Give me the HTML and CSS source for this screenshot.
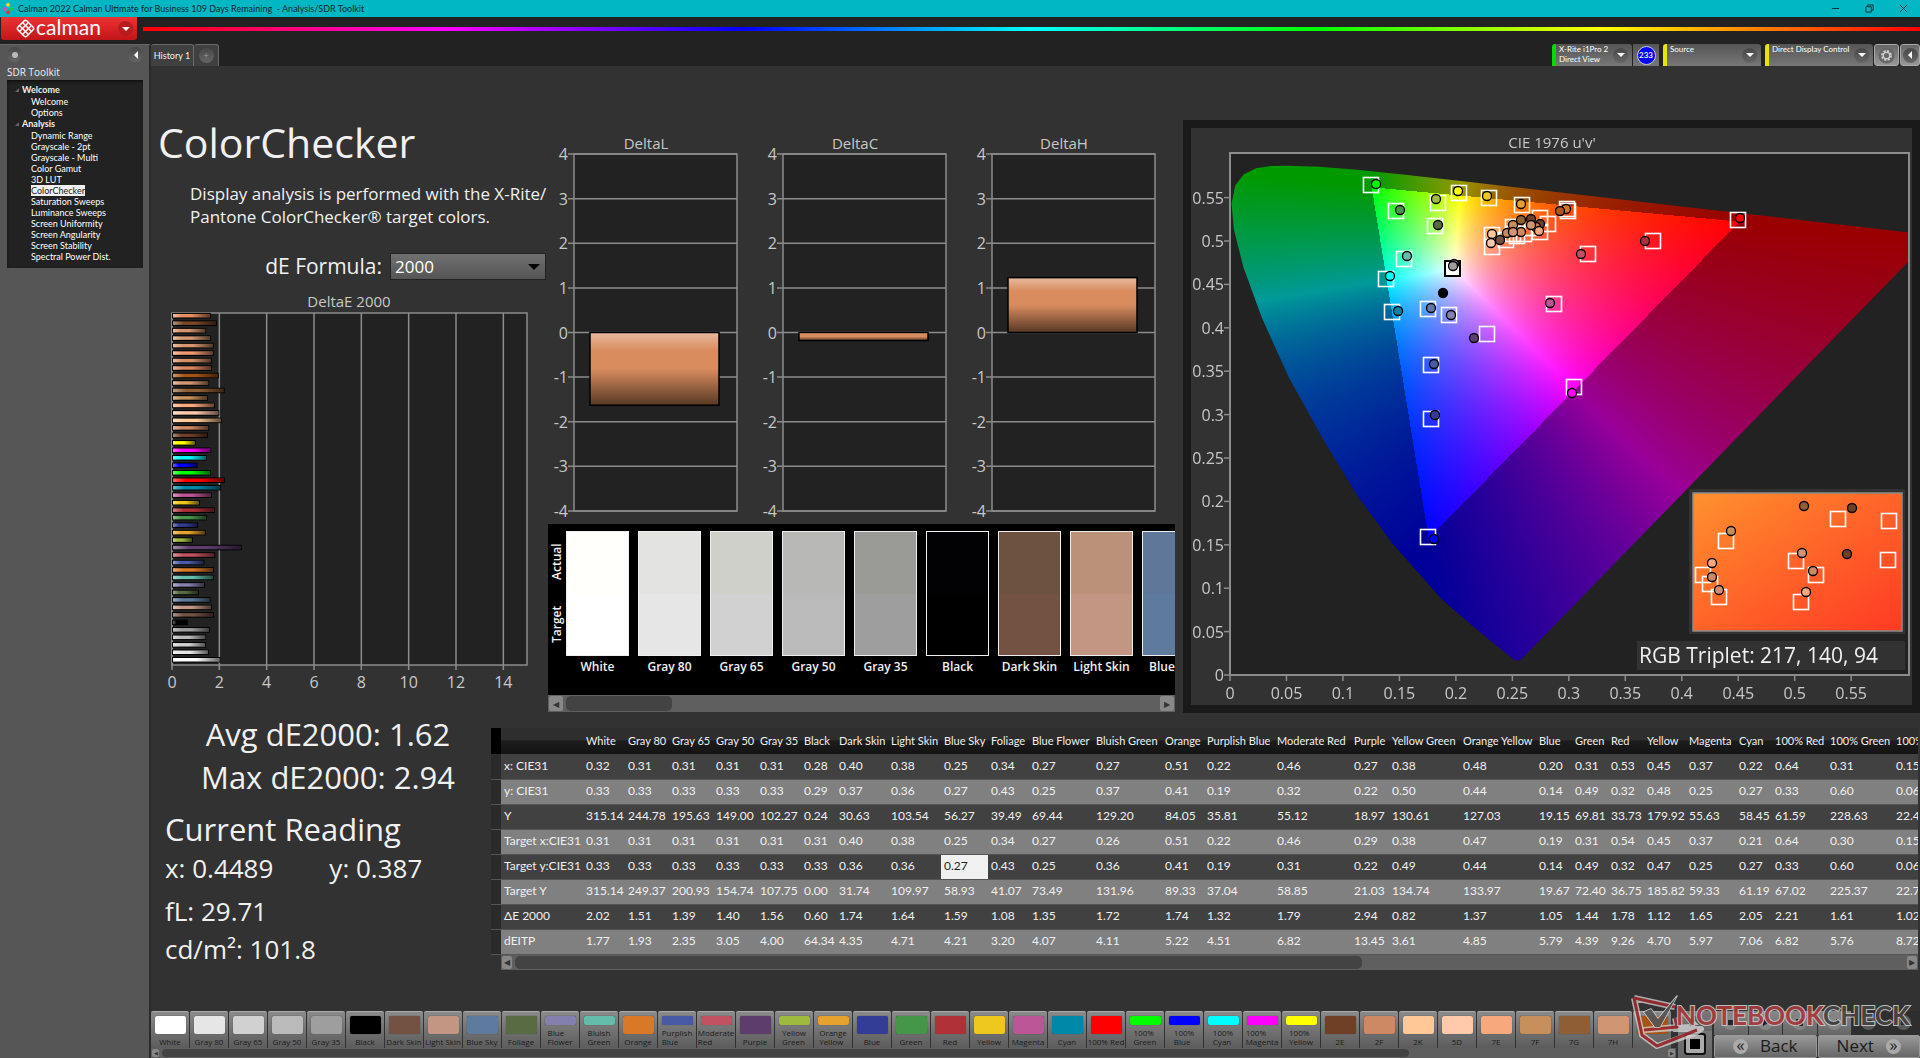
FILE: index.html
```html
<!DOCTYPE html>
<html lang="en">
<head>
    <meta charset="UTF-8">
    <meta name="viewport" content="width=device-width, initial-scale=1.0">
    <title>Calman 2022 - SDR Toolkit</title>
    <link rel="stylesheet" href="styles.css">
</head>
<body>
    <header class="titlebar">
        <svg class="app-icon" viewBox="0 0 14 14">
            <rect x="5" y="0" width="4" height="4" rx="1" fill="#ffd21f" transform="rotate(45 7 2)"/>
            <rect x="1" y="5" width="4" height="4" rx="1" fill="#ff3bb0" transform="rotate(45 3 7)"/>
            <rect x="9" y="5" width="4" height="4" rx="1" fill="#1fc83a" transform="rotate(45 11 7)"/>
            <rect x="5" y="9" width="4" height="4" rx="1" fill="#f03030" transform="rotate(45 7 11)"/>
        </svg>
        <span class="titlebar-text">Calman 2022 Calman Ultimate for Business 109 Days Remaining &nbsp;- Analysis/SDR Toolkit</span>
        <button class="win" aria-label="Minimize"><svg viewBox="0 0 10 10"><path d="M1 5h8"/></svg></button>
        <button class="win" aria-label="Restore"><svg viewBox="0 0 10 10"><path d="M1 3h6v6h-6zM3 3V1h6v6H7"/></svg></button>
        <button class="win" aria-label="Close"><svg viewBox="0 0 10 10"><path d="M1 1l8 8M9 1l-8 8"/></svg></button>
    </header>
    <div class="brandbar">
        <button class="brand">
            <svg class="brand-mark" viewBox="0 0 18 18">
                <g transform="rotate(45 9 9)" fill="none" stroke="#fff" stroke-width="1.4">
                    <rect x="3" y="3" width="12" height="12" rx="2"/>
                    <path d="M7 3v12M11 3v12M3 7h12M3 11h12"/>
                </g>
            </svg>
            <span>calman</span>
            <i class="knob down red"></i>
        </button>
        <div class="rainbow"></div>
    </div>

    <div class="main">
        <aside class="sidebar">
            <div class="sidebar-top">
                <button class="knob dot" aria-label="Pin"></button>
                <button class="knob left" aria-label="Collapse"></button>
            </div>
            <div class="sidebar-title">SDR Toolkit</div>
            <nav class="tree">
                <h2>Welcome</h2>
                <a href="#">Welcome</a>
                <a href="#">Options</a>
                <h2>Analysis</h2>
                <a href="#">Dynamic Range</a>
                <a href="#">Grayscale - 2pt</a>
                <a href="#">Grayscale - Multi</a>
                <a href="#">Color Gamut</a>
                <a href="#">3D LUT</a>
                <a href="#" class="selected">ColorChecker</a>
                <a href="#">Saturation Sweeps</a>
                <a href="#">Luminance Sweeps</a>
                <a href="#">Screen Uniformity</a>
                <a href="#">Screen Angularity</a>
                <a href="#">Screen Stability</a>
                <a href="#">Spectral Power Dist.</a>
            </nav>
        </aside>

        <div class="workspace">
            <div class="tabs">
                <button class="tab">History 1</button>
                <button class="tab add" aria-label="Add tab"><i class="knob">+</i></button>
                <div class="devices">
                    <button class="device green"><span>X-Rite i1Pro 2<br>Direct View</span><i class="knob down"></i></button>
                    <span class="count"><b>233</b></span>
                    <button class="device"><span>Source</span><i class="knob down"></i></button>
                    <button class="device wide"><span>Direct Display Control</span><i class="knob down"></i></button>
                    <button class="tool" aria-label="Settings">
                        <svg viewBox="0 0 18 18"><circle cx="9" cy="9" r="8.5" fill="#666"/><circle cx="9" cy="9" r="4.6" fill="none" stroke="#ccc" stroke-width="2.4" stroke-dasharray="2.2 1.4"/><circle cx="9" cy="9" r="3.4" fill="none" stroke="#ccc" stroke-width="1.4"/></svg>
                    </button>
                    <button class="tool" aria-label="Collapse toolbar"><i class="knob left"></i></button>
                </div>
            </div>

            <div class="upper">
                <section class="intro">
                    <h1>ColorChecker</h1>
                    <p>Display analysis is performed with the X-Rite/<br>Pantone ColorChecker® target colors.</p>
                    <div class="formula">
                        <label for="formula">dE Formula:</label>
                        <select id="formula"><option>2000</option></select>
                    </div>
                    <svg class="chart" id="deltaE" viewBox="0 0 396 420"></svg>
                </section>

                <section class="deltas">
                    <div class="delta-row">
                        <svg class="chart" id="deltaL" viewBox="0 0 209 394"></svg>
                        <svg class="chart" id="deltaC" viewBox="0 0 209 394"></svg>
                        <svg class="chart" id="deltaH" viewBox="0 0 209 394"></svg>
                    </div>
                    <div class="compare">
                        <div class="compare-side"><span>Target</span><span>Actual</span></div>
                        <div class="compare-list" id="compare"></div>
                    </div>
                    <div class="scroll">
                        <button aria-label="Scroll left">◀</button>
                        <div class="track"><div class="thumb short"></div></div>
                        <button aria-label="Scroll right">▶</button>
                    </div>
                </section>

                <section class="cie">
                    <svg class="chart" id="cie" viewBox="0 0 721 577">
                        <foreignObject x="39" y="25" width="679" height="522">
                            <canvas id="gamut" width="679" height="522"></canvas>
                        </foreignObject>
                    </svg>
                </section>
            </div>

            <div class="lower">
                <section class="stats">
                    <div class="summary">Avg dE2000: 1.62<br>Max dE2000: 2.94</div>
                    <h2>Current Reading</h2>
                    <div class="reading"><span>x: 0.4489</span><span>y: 0.387</span></div>
                    <div class="level">fL: 29.71</div>
                    <div class="level">cd/m²: 101.8</div>
                </section>
                <section class="results">
                    <div class="results-clip"><table id="results"></table></div>
                    <div class="scroll thin">
                        <button aria-label="Scroll left">◀</button>
                        <div class="track"><div class="thumb long"></div></div>
                        <button aria-label="Scroll right">▶</button>
                    </div>
                </section>
            </div>

            <footer class="bottom">
                <div class="strip">
                    <div class="patches" id="patches"></div>
                    <div class="scroll mini">
                        <button aria-label="Scroll left">◀</button>
                        <div class="track"><div class="thumb wide"></div></div>
                        <button aria-label="Scroll right">▶</button>
                    </div>
                </div>
                <div class="target-col">
                    <button class="expand" aria-label="Expand"><i class="knob up"></i></button>
                    <button class="pattern" aria-label="Pattern window"><i></i></button>
                </div>
                <div class="transport">
                    <div class="play-row">
                        <button aria-label="Stop"><svg viewBox="0 0 15 15"><circle cx="7.5" cy="7.5" r="7.5"/><path d="M5 5h5v5H5z"/></svg></button>
                        <button aria-label="Play"><svg viewBox="0 0 15 15"><circle cx="7.5" cy="7.5" r="7.5"/><path d="M5 4l6 3.500-6 3.500z"/></svg></button>
                        <button aria-label="Step"><svg viewBox="0 0 15 15"><circle cx="7.5" cy="7.5" r="7.5"/><path d="M4 4h2v7H4zM7 4h4v7H7z"/></svg></button>
                        <button aria-label="Repeat"><svg viewBox="0 0 15 15"><circle cx="7.5" cy="7.5" r="7.5"/><path d="M3 6h6V4l4 3.500-4 3.500V9H3z"/></svg></button>
                        <button disabled aria-label="Refresh"><svg viewBox="0 0 15 15"><circle cx="7.5" cy="7.5" r="7.5"/><path d="M4 5h7v2H4zM4 9h7v2H4z"/></svg></button>
                        <button disabled aria-label="Record"><svg viewBox="0 0 15 15"><circle cx="7.5" cy="7.5" r="7.5"/><path d="M5 5h5v5H5z"/></svg></button>
                    </div>
                    <div class="nav-row">
                        <button><i class="knob">«</i>Back</button>
                        <button>Next<i class="knob">»</i></button>
                    </div>
                </div>
                <svg class="watermark" viewBox="0 0 290 60">
                    <g fill="none" stroke-linejoin="round">
                        <path d="M4 5L45 14M4 5L12 42L27 53L65 40L71 36L43 36M45 25L47 34L14 37L60 34" stroke="#ddd" stroke-width="6" opacity=".8"/>
                        <path d="M4 5L45 14M4 5L12 42L27 53L67 37M45 25L47 34L14 37" stroke="#9c2a2e" stroke-width="3"/>
                        <path d="M14 19L21 16L28 26L47 3L30 34L25 34Z" fill="#555" stroke="#ddd" stroke-width="1.5"/>
                    </g>
                    <text x="46" y="32"><tspan class="mark-red">NOTEBOOK</tspan><tspan class="mark-gray">CHECK</tspan></text>
                </svg>
            </footer>
        </div>
    </div>
    <script src="script.js"></script>
</body>
</html>
```
FILE: styles.css
```css
* {
    box-sizing: border-box;
}
body {
    margin: 0;
    min-height: 100vh;
    display: flex;
    flex-direction: column;
    background-color: #222;
    color: #f0f0f0;
    font-family: "Open Sans", "Noto Sans", sans-serif;
    font-size: 10px;
    overflow: hidden;
}
button {
    font-family: inherit;
    color: inherit;
    border: none;
    padding: 0;
    cursor: pointer;
}
h1, h2, p {
    margin: 0;
    font-weight: normal;
}

/* window chrome */
.titlebar {
    height: 17px;
    display: flex;
    align-items: center;
    background-color: #00b7c3;
    color: #04282b;
}
.app-icon {
    width: 12px;
    height: 14px;
    margin: 0 4px 0 2px;
}
.titlebar-text {
    flex: 1;
    font-family: Lato, sans-serif;
    font-size: 9px;
}
.win {
    width: 34px;
    background: none;
    line-height: 0;
}
.win svg {
    width: 9px;
    fill: none;
    stroke: #04282b;
}
.brandbar {
    height: 27px;
    display: flex;
    align-items: flex-start;
    gap: 6px;
    background-color: #222;
}
.brand {
    width: 136px;
    height: 23px;
    margin-left: 1px;
    padding: 0 4px 0 15px;
    display: flex;
    align-items: center;
    gap: 1px;
    border-radius: 0 0 3px 3px;
    background: linear-gradient(#e33, #c11518);
    font-family: Lato, sans-serif;
    font-size: 21px;
    line-height: 18px;
    color: #fff;
}
.brand span {
    flex: 1;
    text-align: left;
    padding-bottom: 4px;
}
.brand-mark {
    width: 19px;
    height: 19px;
}
.rainbow {
    flex: 1;
    height: 4px;
    margin-top: 10px;
    background: linear-gradient(90deg, #f00, #f0f 17%, #00f 34%, #0ff 50%, #0f0 66%, #ff0 82%, #f00);
}
.knob {
    width: 15px;
    height: 15px;
    display: inline-flex;
    align-items: center;
    justify-content: center;
    flex: none;
    border-radius: 50%;
    background: linear-gradient(#484848, #666);
    font-style: normal;
    color: #999;
}
.knob.red {
    background: #b81c1f;
}
.knob::before {
    border: 4px solid transparent;
}
.knob.down::before {
    content: "";
    border-top-color: #fff;
    border-bottom: 0;
}
.knob.up::before {
    content: "";
    border-bottom-color: #bbb;
    border-top: 0;
}
.knob.left::before {
    content: "";
    border-right-color: #fff;
    border-left: 0;
}
.knob.dot::before {
    content: "";
    width: 6px;
    height: 6px;
    border: 0;
    border-radius: 50%;
    background: #bbb;
}

.main {
    flex: 1;
    display: flex;
}

/* sidebar */
.sidebar {
    width: 151px;
    flex: none;
    padding: 2px 6px 0 7px;
    background-color: #565656;
    border-right: 2px solid #2a2a2a;
    border-top: 1px solid #666;
}
.sidebar-top {
    height: 17px;
    display: flex;
    justify-content: space-between;
}
.sidebar-title {
    height: 16px;
    line-height: 17px;
    font-size: 10px;
}
.tree {
    height: 188px;
    padding: 4px 0 0 24px;
    background-color: #222;
    box-shadow: inset 0 2px 3px #111;
    font-family: Lato, sans-serif;
    font-size: 9px;
    line-height: 11px;
}
.tree h2 {
    margin-left: -16px;
    display: flex;
    align-items: center;
    gap: 3px;
    font-size: 9px;
    font-weight: bold;
    line-height: 12px;
}
.tree h2::before {
    content: "";
    border: 2px solid #666;
    border-top-color: transparent;
    border-left-color: transparent;
}
.tree a {
    display: table;
    color: #fff;
    text-decoration: none;
}
.tree a.selected {
    background-color: #f0f0f0;
    color: #222;
}

/* tab row */
.workspace {
    flex: 1;
    min-width: 0;
    display: flex;
    flex-direction: column;
    background-color: #323232;
}
.tabs {
    height: 22px;
    display: flex;
    background-color: #222;
    font-family: Lato, sans-serif;
}
.tab {
    width: 43px;
    border: 1px solid #6a6a6a;
    border-bottom: 0;
    border-left: 0;
    border-radius: 3px 3px 0 0;
    background-color: #404040;
    font-size: 9px;
}
.tab.add {
    width: 25px;
}
.devices {
    margin-left: auto;
    display: flex;
    gap: 1px;
}
.device {
    width: 98px;
    margin-left: 3px;
    padding: 0 4px 0 3px;
    display: flex;
    align-items: center;
    justify-content: space-between;
    border-left: 4px solid #e6e600;
    border-radius: 3px 3px 0 0;
    background: linear-gradient(#555, #777);
    font-size: 8px;
    line-height: 10px;
    text-align: left;
    white-space: nowrap;
    color: #fff;
}
.device span {
    align-self: flex-start;
}
.device.green {
    width: 80px;
    border-left-color: #0d0;
}
.device.wide {
    width: 108px;
}
.count {
    width: 26px;
    display: flex;
    align-items: center;
    justify-content: center;
    background: linear-gradient(#555, #777);
}
.count b {
    width: 19px;
    height: 19px;
    border: 1px solid #ccd;
    border-radius: 50%;
    background-color: #00f;
    font-size: 8px;
    line-height: 17px;
    text-align: center;
}
.tool {
    width: 25px;
    border: 1px solid #aaa;
    border-radius: 3px;
    background: linear-gradient(#666, #999);
    line-height: 0;
}
.tool + .tool {
    width: 20px;
}
.tool svg {
    width: 17px;
}

/* upper area */
.upper {
    display: grid;
    grid-template-columns: minmax(0, 388fr) minmax(0, 628fr) minmax(0, 737fr);
    column-gap: 8px;
}
.intro {
    margin-right: -8px;
    padding-top: 48px;
}
.intro h1 {
    padding-left: 7px;
    font-size: 41px;
    line-height: 56px;
}
.intro p {
    margin: 12px 0 24px 39px;
    font-size: 17px;
    line-height: 23px;
    white-space: nowrap;
}
.formula {
    height: 28px;
    padding-right: 1px;
    display: flex;
    justify-content: flex-end;
    align-items: center;
    gap: 8px;
    font-size: 21px;
}
.formula select {
    width: 156px;
    height: 27px;
    padding: 0 0 0 4px;
    appearance: none;
    border: 1px solid #222;
    border-radius: 0;
    background:
        url("data:image/svg+xml,%3Csvg xmlns='http://www.w3.org/2000/svg' width='12' height='6'%3E%3Cpath d='M0 0h12L6 6z'/%3E%3C/svg%3E") calc(100% - 5px) 10px no-repeat,
        linear-gradient(#707070, #555);
    color: #fff;
    font-family: inherit;
    font-size: 17px;
}
.chart {
    display: block;
    width: 100%;
    font-size: 16px;
    fill: #c8c8c8;
}
.intro .chart {
    margin-top: 10px;
}
.chart-title {
    font-size: 15px;
}
.deltas {
    padding-top: 64px;
    margin-left: 1px;
}
.delta-row {
    display: grid;
    grid-template-columns: repeat(3, minmax(0, 1fr));
}
.compare {
    height: 171px;
    padding-top: 7px;
    display: flex;
    background-color: #000;
}
.compare-side {
    width: 18px;
    height: 125px;
    display: flex;
    justify-content: space-around;
    writing-mode: vertical-rl;
    transform: rotate(180deg);
    font-size: 12px;
    font-weight: 600;
    line-height: 18px;
}
.compare-list {
    flex: 1;
    min-width: 0;
    display: flex;
    gap: 9px;
    overflow: hidden;
}
.compare-item {
    width: 63px;
    flex: none;
    font-size: 12px;
    font-weight: 600;
    line-height: 22px;
    text-align: center;
    white-space: nowrap;
}
.compare-color {
    height: 125px;
    border: 1px solid #eee;
}
.scroll {
    height: 17px;
    display: flex;
    background-color: #5f5f5f;
}
.scroll button {
    width: 16px;
    border: 1px solid #5f5f5f;
    border-radius: 3px;
    background-color: #888;
    font-size: 8px;
    line-height: 12px;
    color: #333;
}
.track {
    flex: 1;
    padding: 1px 2px;
}
.thumb {
    height: 100%;
    border-radius: 5px;
    background-color: #434343;
}
.thumb.short {
    width: 18%;
}
.thumb.long {
    width: 61%;
}
.thumb.wide {
    width: 83%;
}
.cie {
    align-self: start;
    margin-top: 54px;
    border: 8px solid #1a1a1a;
}
#gamut {
    display: block;
}
.triplet {
    font-size: 21px;
    fill: #f0f0f0;
}

/* lower area */
.lower {
    display: flex;
}
.stats {
    width: 340px;
    flex: none;
    padding: 0 0 0 14px;
    font-size: 26px;
}
.summary {
    font-size: 31px;
    line-height: 43px;
    text-align: center;
    white-space: nowrap;
}
.stats h2 {
    margin-top: 9px;
    font-size: 31px;
    line-height: 42px;
}
.reading {
    display: flex;
    gap: 56px;
    line-height: 36px;
    white-space: nowrap;
}
.level {
    margin-top: 4px;
    line-height: 34px;
}
.reading + .level {
    margin-top: 8px;
}
.results {
    flex: 1;
    min-width: 0;
    padding: 15px 2px 0 0;
}
.results-clip {
    overflow: hidden;
}
.results table {
    width: 1px;
    table-layout: fixed;
    border-collapse: collapse;
    font-family: Lato, "Open Sans", sans-serif;
    font-size: 12px;
}
.results th,
.results td {
    height: 25px;
    padding: 0 0 2px 3px;
    font-weight: normal;
    text-align: left;
    white-space: nowrap;
}
.results thead th {
    height: 26px;
    background: linear-gradient(#2e2e2e 45%, #1c1c1c 50%, #141414);
    font-size: 11px;
}
.results tbody tr {
    background-color: #414141;
    border-bottom: 1px solid #555;
}
.results tbody tr:nth-child(even) {
    background-color: #808080;
}
.results tbody th:first-child {
    background-color: #2a2a2a;
}
.results thead th:first-child {
    background: #000;
}
.results td.selected {
    background-color: #f0f0f0;
    color: #222;
}
.scroll.thin {
    height: 15px;
    margin-left: 10px;
}
.scroll.thin button {
    width: 12px;
}

/* bottom bar */
.bottom {
    position: relative;
    margin-top: auto;
    height: 47px;
    display: flex;
    gap: 2px;
}
.strip {
    flex: 1;
    min-width: 0;
}
.patches {
    height: 37px;
    display: flex;
    overflow: hidden;
}
.patch {
    width: 38px;
    flex: none;
    margin-right: 1px;
    padding: 4px 0 2px;
    display: flex;
    flex-direction: column;
    align-items: center;
    justify-content: space-between;
    border-top: 1px solid #aaa;
    border-radius: 2px 2px 0 0;
    background: linear-gradient(#8a8a8a, #5c5c5c);
    font-size: 8px;
    line-height: 9px;
    color: #1c1c1c;
    white-space: nowrap;
}
.patch i {
    width: 31px;
    height: 18px;
    border-radius: 2px;
    box-shadow: 0 0 1px #333;
}
.patch.two i {
    height: 9px;
}
.patch.two span {
    text-align: left;
}
.scroll.mini {
    height: 10px;
}
.scroll.mini button {
    width: 9px;
    font-size: 5px;
    line-height: 8px;
}
.target-col {
    width: 34px;
    display: flex;
    flex-direction: column;
}
.target-col button {
    flex: 1;
    background: linear-gradient(#777, #666);
}
.target-col .expand {
    flex: 0 0 18px;
}
.pattern i {
    display: block;
    width: 22px;
    height: 22px;
    margin: auto;
    border: 2px solid #111;
    border-radius: 3px;
    background-color: #000;
    box-shadow: inset 0 0 0 4px #aaa;
}
.transport {
    width: 206px;
    display: flex;
    flex-direction: column;
}
.play-row,
.nav-row {
    flex: 1;
    display: flex;
    gap: 1px;
}
.play-row button {
    flex: 1;
    background: linear-gradient(#888, #666);
    line-height: 0;
}
.play-row button:disabled {
    background: #2b2b2b;
    opacity: 0.5;
}
.play-row svg {
    width: 15px;
    fill: #222;
}
.play-row circle {
    fill: #858585;
}
.nav-row button {
    flex: 1;
    display: flex;
    align-items: center;
    justify-content: center;
    gap: 12px;
    border: 1px solid #999;
    border-radius: 2px;
    background: linear-gradient(#999, #666);
    font-size: 17px;
    line-height: 20px;
    color: #1c1c1c;
}
.nav-row .knob {
    background: #aaa;
    color: #222;
    font-size: 16px;
    line-height: 13px;
    padding-bottom: 2px;
}
.watermark {
    position: absolute;
    right: 0;
    bottom: 5px;
    width: 290px;
    height: 60px;
    font-family: Lato, sans-serif;
    font-size: 26px;
    font-weight: bold;
    pointer-events: none;
    paint-order: stroke;
    stroke: #ccc;
    stroke-width: 2px;
    opacity: 0.9;
}
.mark-red {
    fill: #a8393d;
}
.mark-gray {
    fill: #444;
}
```
FILE: script.js
```js
// name, target colour, dE 2000
const patches = [
    ['White', '#ffffff', 2.02], ['Gray 80', '#e6e6e6', 1.51], ['Gray 65', '#d1d1d1', 1.39],
    ['Gray 50', '#bababa', 1.40], ['Gray 35', '#9e9e9e', 1.56], ['Black', '#000000', 0.60],
    ['Dark Skin', '#735244', 1.74], ['Light Skin', '#c29682', 1.64], ['Blue Sky', '#5e7b9e', 1.59],
    ['Foliage', '#586b42', 1.08], ['Blue Flower', '#8480ae', 1.35], ['Bluish Green', '#63bdaa', 1.72],
    ['Orange', '#d97827', 1.74], ['Purplish Blue', '#495aa4', 1.32], ['Moderate Red', '#c25161', 1.79],
    ['Purple', '#5c3d6b', 2.94], ['Yellow Green', '#9ebb40', 0.82], ['Orange Yellow', '#e6a22e', 1.37],
    ['Blue', '#343d96', 1.05], ['Green', '#469649', 1.44], ['Red', '#b03038', 1.78],
    ['Yellow', '#eec81f', 1.12], ['Magenta', '#bb5595', 1.65], ['Cyan', '#0088a8', 2.05],
    ['100% Red', '#ff0000', 2.21], ['100% Green', '#00ff00', 1.61], ['100% Blue', '#0000ff', 1.02],
    ['100% Cyan', '#00ffff', 1.42], ['100% Magenta', '#ff00ff', 1.62], ['100% Yellow', '#ffff00', 0.94],
    ['2E', '#704026', 1.48], ['2F', '#cd8864', 1.53], ['2K', '#ffc896', 2.07], ['5D', '#ffc8ab', 1.97],
    ['7E', '#f7a87d', 1.78], ['7F', '#c78f5c', 1.48], ['7G', '#8f5e34', 2.2], ['7H', '#d09673', 1.53],
    ['7I', '#a35518', 1.95], ['7J', '#d98560', 1.65], ['8D', '#d59068', 1.65], ['8E', '#f09870', 1.72],
    ['8F', '#d5976e', 1.72], ['8G', '#d49870', 1.6], ['8H', '#d6946e', 1.4], ['8I', '#7a4825', 1.86],
    ['8J', '#e88f62', 1.6]
];

const el = id => document.getElementById(id);
const text = (x, y, s, anchor = 'middle') => `<text x="${x}" y="${y}" text-anchor="${anchor}">${s}</text>`;
const title = (x, y, s) => `<text class="chart-title" x="${x}" y="${y}" text-anchor="middle">${s}</text>`;
const line = (x1, y1, x2, y2) => `<path d="M${x1} ${y1}L${x2} ${y2}" stroke="#8c8c8c" stroke-width="1.5"/>`;
const frame = (x, y, w, h, fill) => `<rect x="${x}" y="${y}" width="${w}" height="${h}" fill="${fill}" stroke="#8c8c8c" stroke-width="1.5"/>`;

// shading laid over every bar
const shade = (id, dir) => `<linearGradient id="${id}" ${dir}>
    <stop offset="0" stop-color="#fff" stop-opacity=".4"/><stop offset=".25" stop-color="#fff" stop-opacity="0"/>
    <stop offset=".5" stop-color="#000" stop-opacity="0"/><stop offset="1" stop-color="#000" stop-opacity=".6"/></linearGradient>`;

// DeltaE 2000 bars, last patch on top
function drawDeltaE() {
    let out = shade('shadeE', 'x2="1" y2="0"') + title(198, 17, 'DeltaE 2000') + frame(21, 23, 355, 352, '#222');
    for (let v = 0; v <= 14; v += 2) {
        const x = 21 + v * 355 / 15;
        out += line(x, 23, x, 380) + text(x, 398, v);
    }
    patches.forEach((p, i) => {
        const y = 368 - i * 7.48, w = p[2] * 345 / 15;
        out += `<rect x="21" y="${y - 1}" width="${w + 2}" height="5.500" fill="#000"/>
            <rect x="22" y="${y}" width="${w}" height="3.500" fill="${p[1]}"/>
            <rect x="22" y="${y}" width="${w}" height="3.500" fill="url(#shadeE)"/>`;
    });
    el('deltaE').innerHTML = out;
}

function drawDelta(id, value) {
    let out = shade('shade' + id, 'x2="0" y2="1"') + title(98, 19, id.replace('delta', 'Delta')) + frame(26, 24, 163, 357, '#222');
    for (let v = -4; v <= 4; v++) {
        const y = 202.5 - v * 44.6;
        out += line(20, y, 189, y) + text(20, y + 6, v, 'end');
    }
    const y = 202.5 - Math.max(value, 0) * 44.6;
    const rect = `x="42" y="${y}" width="129" height="${Math.abs(value) * 44.6}"`;
    out += `<rect ${rect} fill="#d98c5e"/><rect ${rect} fill="url(#shade${id})" stroke="#000" stroke-width="1.5"/>`;
    el(id).innerHTML = out;
}

// chromaticity diagram: u' 0..0.6, v' 0..0.6
const U = 1129.4, V = 868, H = 522;
const locus = [
    [.2569, .0166], [.2522, .0169], [.2347, .035], [.2161, .0549], [.1877, .0871], [.1441, .151], [.112, .208], [.0828, .2708],
    [.0521, .3427], [.0282, .4117], [.0119, .4698], [.0035, .5131], [.0014, .5432], [.0046, .5638], [.0123, .577], [.0231, .5837], [.036, .5865], [.0501, .5868],
    [.0792, .5856], [.1127, .5821], [.1531, .5766], [.2026, .5694], [.2623, .5604], [.3315, .5501], [.4035, .5393],
    [.4692, .5296], [.5203, .5219], [.6234, .5065]
];

function drawGamut() {
    const c = el('gamut'), ctx = c.getContext('2d');
    const img = ctx.createImageData(c.width, c.height);
    const level = v => 255 * Math.pow(Math.max(v, 0), .9);
    for (let j = 0; j < c.height; j++) {
        for (let i = 0; i < c.width; i++) {
            const u = i / U, v = Math.max((H - j) / V, .001);
            const X = 9 * u / (4 * v), Z = (12 - 3 * u - 20 * v) / (4 * v);
            const rgb = [
                3.2406 * X - 1.5372 - .4986 * Z,
                -.9689 * X + 1.8758 + .0415 * Z,
                .0557 * X - .204 + 1.057 * Z
            ];
            const max = Math.max(...rgb), dim = Math.min(...rgb) < 0 ? .6 : 1;
            const k = (j * c.width + i) * 4;
            rgb.forEach((n, m) => img.data[k + m] = level(n / max) * dim);
            img.data[k + 3] = 255;
        }
    }
    ctx.putImageData(img, 0, 0);
    ctx.globalCompositeOperation = 'destination-in';
    ctx.beginPath();
    locus.forEach(([u, v]) => ctx.lineTo(u * U, H - v * V));
    ctx.closePath();
    ctx.fill();
}

const squares = [
    [181, 57], [206, 83], [248, 75], [269, 65], [299, 70], [332, 77], [378, 83], [377, 81], [548, 92], [245, 98], [214, 131],
    [196, 151], [202, 184], [238, 181], [259, 187], [297, 206], [241, 237], [241, 291], [364, 176], [398, 126], [463, 113],
    [384, 259], [302, 107], [302, 119], [316, 112], [323, 106], [323, 99], [334, 106], [342, 100], [350, 90], [358, 96],
    [350, 104], [327, 108], [238, 409]
];
const dots = [
    [186, 56, '#0f0'], [210, 82, '#469646'], [246, 71, '#a0bc40'], [268, 63, '#ff0'], [297, 68, '#eec81f'], [331, 76, '#e4a12f'],
    [376, 81, '#d77827'], [370, 83, '#a85a20'], [550, 90, '#f00'], [248, 97, '#586b42'], [217, 128, '#63bdaa'], [200, 148, '#0ff'],
    [208, 183, '#0085a3'], [241, 180, '#5f7a9e'], [261, 187, '#8480ae'], [284, 210, '#5c3d6b'], [253, 165, '#000'], [264, 136, '#777'],
    [263, 138, '#9c9c9c'], [244, 236, '#495aa4'], [245, 287, '#343d93'], [360, 175, '#ba5593'], [391, 126, '#c05162'],
    [455, 113, '#ad3039'], [382, 265, '#f0f'], [244, 411, '#00f'], [302, 106, '#ffc99c'], [301, 115, '#f9c8ae'], [310, 112, '#72503f'],
    [317, 105, '#c98a63'], [323, 97, '#c78f5c'], [331, 92, '#8f5e34'], [341, 91, '#6e4025'], [350, 96, '#6e4025'],
    [346, 99, '#c97c55'], [341, 97, '#d0966f'], [349, 103, '#f7a87d'], [331, 104, '#cd8864'], [323, 104, '#d39572']
];
const insetSquares = [[648, 391], [699, 393], [536, 413], [606, 433], [698, 432], [626, 447], [513, 447], [520, 456], [529, 469], [611, 474]];
const insetDots = [
    [614, 378, '#8f5e34'], [662, 380, '#6e4025'], [541, 403, '#c78f5c'], [612, 425, '#d19570'], [657, 426, '#6e4025'],
    [522, 435, '#f7a87d'], [522, 449, '#cd8864'], [623, 443, '#cd8864'], [529, 462, '#d09070'], [616, 464, '#f7a87d']
];
const square = ([x, y]) => `<rect x="${x - 8.5}" y="${y - 7.5}" width="15" height="15" fill="none" stroke="#fff" stroke-width="1.6"/>`;
const dot = ([x, y, c]) => `<circle cx="${x - 1}" cy="${y}" r="4.5" fill="${c}" stroke="#000" stroke-width="1.3"/>`;

function drawCie() {
    let back = '<rect width="721" height="577" fill="#323232"/>' + frame(39, 25, 679, 522, '#222');
    let out = '<path d="M39 25H718V547H39Z" fill="none" stroke="#8c8c8c" stroke-width="2"/>' + title(361, 20, "CIE 1976 u'v'");
    for (let i = 0; i <= 11; i++) {
        const label = +(i * .05).toFixed(2), x = 39 + i * 56.47, y = 547 - i * 43.4;
        out += line(x, 547, x, 553) + text(x, 571, label);
        out += line(33, y, 39, y) + text(33, y + 6, label, 'end');
    }
    out += squares.map(square).join('');
    out += '<rect x="254" y="133" width="15" height="15" fill="#fff" stroke="#000" stroke-width="2"/>';
    out += dots.map(dot).join('');
    out += `<linearGradient id="warm" x2="1" y2="1"><stop offset="0" stop-color="#ff912e"/><stop offset=".5" stop-color="#ff6428"/><stop offset="1" stop-color="#ff3a24"/></linearGradient>
        <rect x="498" y="361" width="216" height="145" fill="#323232"/>` + frame(502, 365, 209, 138, 'url(#warm)');
    out += insetSquares.map(square).join('') + insetDots.map(dot).join('');
    out += '<rect x="446" y="513" width="268" height="29" fill="#323232"/><text class="triplet" x="448" y="535">RGB Triplet: 217, 140, 94</text>';
    el('cie').insertAdjacentHTML('afterbegin', back);
    el('cie').insertAdjacentHTML('beforeend', out);
}

// results table
const widths = [10, 82, 42, 44, 44, 44, 44, 35, 52, 53, 47, 41, 64, 69, 42, 70, 77, 38, 71, 76, 36, 36, 36, 42, 50, 36, 55, 66, 66];
const rows = {
    'x: CIE31': '0.32 0.31 0.31 0.31 0.31 0.28 0.40 0.38 0.25 0.34 0.27 0.27 0.51 0.22 0.46 0.27 0.38 0.48 0.20 0.31 0.53 0.45 0.37 0.22 0.64 0.31 0.15',
    'y: CIE31': '0.33 0.33 0.33 0.33 0.33 0.29 0.37 0.36 0.27 0.43 0.25 0.37 0.41 0.19 0.32 0.22 0.50 0.44 0.14 0.49 0.32 0.48 0.25 0.27 0.33 0.60 0.06',
    'Y': '315.14 244.78 195.63 149.00 102.27 0.24 30.63 103.54 56.27 39.49 69.44 129.20 84.05 35.81 55.12 18.97 130.61 127.03 19.15 69.81 33.73 179.92 55.63 58.45 61.59 228.63 22.4',
    'Target x:CIE31': '0.31 0.31 0.31 0.31 0.31 0.31 0.40 0.38 0.25 0.34 0.27 0.26 0.51 0.22 0.46 0.29 0.38 0.47 0.19 0.31 0.54 0.45 0.37 0.21 0.64 0.30 0.15',
    'Target y:CIE31': '0.33 0.33 0.33 0.33 0.33 0.33 0.36 0.36 0.27 0.43 0.25 0.36 0.41 0.19 0.31 0.22 0.49 0.44 0.14 0.49 0.32 0.47 0.25 0.27 0.33 0.60 0.06',
    'Target Y': '315.14 249.37 200.93 154.74 107.75 0.00 31.74 109.97 58.93 41.07 73.49 131.96 89.33 37.04 58.85 21.03 134.74 133.97 19.67 72.40 36.75 185.82 59.33 61.19 67.02 225.37 22.7',
    'ΔE 2000': '2.02 1.51 1.39 1.40 1.56 0.60 1.74 1.64 1.59 1.08 1.35 1.72 1.74 1.32 1.79 2.94 0.82 1.37 1.05 1.44 1.78 1.12 1.65 2.05 2.21 1.61 1.02',
    'dEITP': '1.77 1.93 2.35 3.05 4.00 64.34 4.35 4.71 4.21 3.20 4.07 4.11 5.22 4.51 6.82 13.45 3.61 4.85 5.79 4.39 9.26 4.70 5.97 7.06 6.82 5.76 8.72'
};

function buildTable() {
    const cols = widths.map(w => `<col style="width:${w}px">`).join('');
    const head = patches.slice(0, 27).map(p => `<th scope="col">${p[0]}</th>`).join('');
    const body = Object.entries(rows).map(([name, values]) => {
        const cells = values.split(' ').map((v, i) =>
            `<td${name === 'Target y:CIE31' && i === 8 ? ' class="selected"' : ''}>${v}</td>`).join('');
        return `<tr><th></th><th scope="row">${name}</th>${cells}</tr>`;
    }).join('');
    el('results').innerHTML = `<colgroup>${cols}</colgroup><thead><tr><th></th><th></th>${head}</tr></thead><tbody>${body}</tbody>`;
}

// measured colours for the comparison list
const actual = ['#fffffc', '#e3e3e2', '#cfd0ca', '#b8b8b6', '#9a9a97', '#020204', '#6e5241', '#bc917a', '#5f7799'];

function buildSwatches() {
    el('compare').innerHTML = actual.map((c, i) => `<div class="compare-item">
        <div class="compare-color" style="background:linear-gradient(${c} 50%, ${patches[i][1]} 50%)"></div>${patches[i][0]}</div>`).join('');
    el('patches').innerHTML = patches.slice(0, 39).map(([name, color]) => {
        const two = name.length > 10 || /^Blue F|^100% [^R]/.test(name);
        const label = two ? name.replace(' ', '<br>') : name;
        return `<button class="patch${two ? ' two' : ''}"><i style="background:${color}"></i><span>${label}</span></button>`;
    }).join('');
}

drawDeltaE();
drawDelta('deltaL', -1.63);
drawDelta('deltaC', -0.18);
drawDelta('deltaH', 1.23);
drawGamut();
drawCie();
buildTable();
buildSwatches();
```
